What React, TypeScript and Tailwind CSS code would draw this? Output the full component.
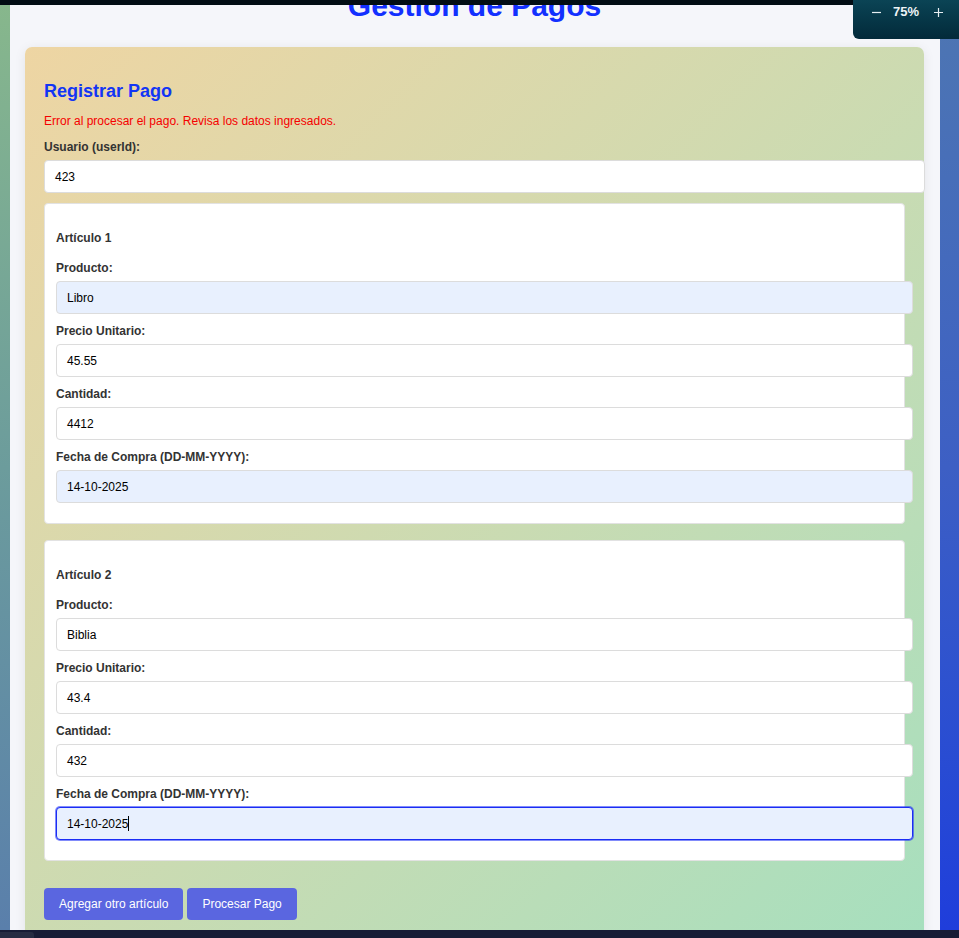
import React from 'react'

type Field = { label: string; value: string; filled?: boolean; focused?: boolean }

const articles: { title: string; fields: Field[] }[] = [
  {
    title: 'Artículo 1',
    fields: [
      { label: 'Producto:', value: 'Libro', filled: true },
      { label: 'Precio Unitario:', value: '45.55' },
      { label: 'Cantidad:', value: '4412' },
      { label: 'Fecha de Compra (DD-MM-YYYY):', value: '14-10-2025', filled: true },
    ],
  },
  {
    title: 'Artículo 2',
    fields: [
      { label: 'Producto:', value: 'Biblia' },
      { label: 'Precio Unitario:', value: '43.4' },
      { label: 'Cantidad:', value: '432' },
      { label: 'Fecha de Compra (DD-MM-YYYY):', value: '14-10-2025', filled: true, focused: true },
    ],
  },
]

const FormField: React.FC<Field> = ({ label, value, filled, focused }) => (
  <div className="mb-[10px]">
    <label className="block text-[12px] leading-[14px] font-bold text-[#333] mb-[6px]">{label}</label>
    <div
      className={`w-[calc(100%+20px)] h-[33px] flex items-center px-[10px] rounded-[4px] border text-[12px] text-black ${
        filled ? 'bg-[#e8f0fe]' : 'bg-white'
      } ${focused ? 'border-[#1a2cf5] shadow-[0_0_0_1px_rgba(26,44,245,0.55)]' : 'border-[#dcdcdc]'}`}
    >
      {value}
      {focused && <span className="inline-block w-px h-[15px] bg-black" />}
    </div>
  </div>
)

export default function App() {
  return (
    <div className="relative w-[959px] h-[938px] overflow-hidden flex flex-col bg-[#020d14] font-['Liberation_Sans',Arial,sans-serif]">
      {/* browser top edge */}
      <div className="h-[5px] shrink-0 bg-[#020d14]" />

      <div className="flex flex-1 min-h-0">
        <div className="w-[10px] shrink-0 bg-gradient-to-b from-[#87b78c] via-[#6c9c9c] to-[#5a7fab]" />

        <main className="flex-1 min-w-0 overflow-hidden bg-[#f5f6fa] pl-[15px] pr-[16px]">
          <h1 className="-mt-[16px] text-center text-[30px] leading-[34px] font-bold text-[#1230ff]">
            Gestión de Pagos
          </h1>

          <div className="mt-[24px] rounded-[7px] bg-gradient-to-br from-[#eed5a3] to-[#a6dfbe] shadow-[0_2px_12px_rgba(0,0,0,0.08)] px-[19px] pt-[33px] pb-[20px]">
            <h2 className="text-[18px] leading-[22px] font-bold text-[#1235f5]">Registrar Pago</h2>
            <p className="mt-[12px] text-[12px] leading-[14px] text-[#f50000]">
              Error al procesar el pago. Revisa los datos ingresados.
            </p>

            <div className="mt-[12px]">
              <FormField label="Usuario (userId):" value="423" />
            </div>

            {articles.map((a) => (
              <div key={a.title} className="mb-[16px] rounded-[4px] border border-[#e2e2e2] bg-white px-[11px] pt-[27px] pb-[10px]">
                <h4 className="text-[12px] leading-[14px] font-bold text-[#333] mb-[16px]">{a.title}</h4>
                {a.fields.map((f) => (
                  <FormField key={f.label} {...f} />
                ))}
              </div>
            ))}

            <div className="mt-[27px] flex gap-[4px]">
              <button className="h-[32px] px-[15px] rounded-[4px] bg-[#5a66e0] text-white text-[12px]">
                Agregar otro artículo
              </button>
              <button className="h-[32px] px-[15px] rounded-[4px] bg-[#5a66e0] text-white text-[12px]">
                Procesar Pago
              </button>
            </div>
          </div>
        </main>

        <div className="w-[19px] shrink-0 bg-gradient-to-b from-[#4e76b2] via-[#3d5fc4] to-[#1f3ddb]" />
      </div>

      {/* browser bottom edge */}
      <div className="h-[8px] shrink-0 flex bg-[#171c35]">
        <div className="w-[34px] mt-[2px] rounded-tr-[3px] bg-[#262c42]" />
      </div>

      {/* zoom indicator */}
      <div className="absolute top-0 right-0 w-[106px] h-[39px] rounded-bl-[6px] bg-gradient-to-b from-[#0b4455] to-[#032a3a] text-white">
        <div className="mt-[4px] h-[16px] flex items-center">
          <svg className="ml-[19px]" width="9" height="9" viewBox="0 0 9 9">
            <path d="M0 4.5h9" stroke="#e6eef2" strokeWidth="1.2" />
          </svg>
          <span className="ml-[12px] text-[13px] font-bold text-[#eef4f6]">75%</span>
          <svg className="ml-[15px]" width="9" height="9" viewBox="0 0 9 9">
            <path d="M0 4.5h9M4.5 0v9" stroke="#e6eef2" strokeWidth="1.2" />
          </svg>
        </div>
      </div>
    </div>
  )
}
